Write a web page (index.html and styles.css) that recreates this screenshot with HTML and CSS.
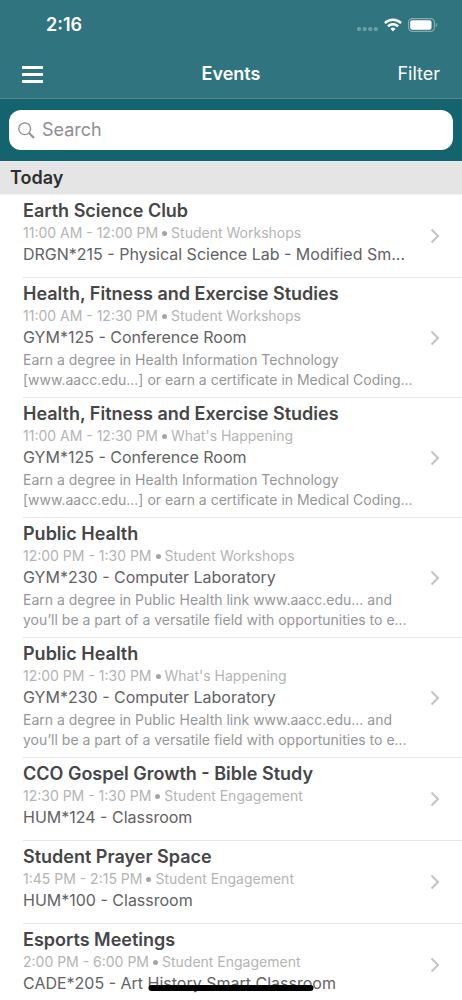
FILE: index.html
```html
<!DOCTYPE html>
<html lang="en">
<head>
<meta charset="utf-8">
<meta name="viewport" content="width=device-width, initial-scale=1">
<title>Events</title>
<link rel="stylesheet" href="styles.css">
</head>
<body>
<svg class="sprite" aria-hidden="true">
  <symbol id="chevron" viewBox="0 0 10 16"><path d="M1.5 1.5 8 8 1.5 14.5" fill="none" stroke="#c4c4c8" stroke-width="2"/></symbol>
</svg>
<div class="app">
  <header class="top">
    <div class="status">
      <span class="clock">2:16</span>
      <div class="indicators">
        <svg width="21" height="5" viewBox="0 0 21 5" fill="#6d9da4" aria-hidden="true"><rect width="4" height="4" rx="1.5"/><rect x="5.6" width="4" height="4" rx="1.5"/><rect x="11.2" width="4" height="4" rx="1.5"/><rect x="16.8" width="4" height="4" rx="1.5"/></svg>
        <svg class="wifi" width="18" height="14" viewBox="0 0 18 14" fill="none" stroke="#fff" stroke-width="2.5" aria-hidden="true"><path d="M.9 5.1a11.6 11.6 0 0 1 16.2 0"/><path d="M4 8.4a7.1 7.1 0 0 1 10 0"/><path d="M6.5 10.8a3.6 3.6 0 0 1 5 0L9 13.4z" fill="#fff" stroke="none"/></svg>
        <svg width="30" height="14" viewBox="0 0 30 14" aria-hidden="true"><rect x=".6" y=".6" width="25.8" height="12.8" rx="3.6" fill="none" stroke="#83acb2" stroke-width="1.2"/><rect x="2.2" y="2.2" width="21.3" height="9.6" rx="2" fill="#fff"/><path d="M27.8 4.8c1.8.7 1.8 3.7 0 4.4z" fill="#83acb2"/></svg>
      </div>
    </div>
    <nav class="bar">
      <button class="menu" type="button" aria-label="Menu">
        <svg width="21" height="17" viewBox="0 0 21 17" fill="#fff" aria-hidden="true"><rect width="21" height="3"/><rect y="7" width="21" height="3"/><rect y="14" width="21" height="3"/></svg>
      </button>
      <h1 class="heading">Events</h1>
      <button class="filter" type="button">Filter</button>
    </nav>
  </header>
  <form class="search">
    <label class="field">
      <svg width="17" height="17" viewBox="0 0 17 17" fill="none" stroke="#8e8e93" aria-label="Search"><circle cx="6.7" cy="6.7" r="5.9" stroke-width="1.3"/><path d="m11 11 5 5" stroke-width="2"/></svg>
      <input class="query" type="text" placeholder="Search">
    </label>
  </form>
  <main class="feed">
    <h2 class="day">Today</h2>
    <ul class="events">
      <li class="event"><div class="info"><h3 class="title">Earth Science Club</h3><p class="meta">11:00 AM - 12:00 PM<i class="dot"></i>Student Workshops</p><p class="place">DRGN*215 - Physical Science Lab - Modified Sm...</p></div><svg class="chevron"><use href="#chevron"/></svg></li>
      <li class="event"><div class="info"><h3 class="title">Health, Fitness and Exercise Studies</h3><p class="meta">11:00 AM - 12:30 PM<i class="dot"></i>Student Workshops</p><p class="place">GYM*125 - Conference Room</p><p class="about">Earn a degree in Health Information Technology<br>[www.aacc.edu...] or earn a certificate in Medical Coding...</p></div><svg class="chevron"><use href="#chevron"/></svg></li>
      <li class="event"><div class="info"><h3 class="title">Health, Fitness and Exercise Studies</h3><p class="meta">11:00 AM - 12:30 PM<i class="dot"></i>What's Happening</p><p class="place">GYM*125 - Conference Room</p><p class="about">Earn a degree in Health Information Technology<br>[www.aacc.edu...] or earn a certificate in Medical Coding...</p></div><svg class="chevron"><use href="#chevron"/></svg></li>
      <li class="event"><div class="info"><h3 class="title">Public Health</h3><p class="meta">12:00 PM - 1:30 PM<i class="dot"></i>Student Workshops</p><p class="place">GYM*230 - Computer Laboratory</p><p class="about">Earn a degree in Public Health link www.aacc.edu... and<br>you’ll be a part of a versatile field with opportunities to e...</p></div><svg class="chevron"><use href="#chevron"/></svg></li>
      <li class="event"><div class="info"><h3 class="title">Public Health</h3><p class="meta">12:00 PM - 1:30 PM<i class="dot"></i>What's Happening</p><p class="place">GYM*230 - Computer Laboratory</p><p class="about">Earn a degree in Public Health link www.aacc.edu... and<br>you’ll be a part of a versatile field with opportunities to e...</p></div><svg class="chevron"><use href="#chevron"/></svg></li>
      <li class="event"><div class="info"><h3 class="title">CCO Gospel Growth - Bible Study</h3><p class="meta">12:30 PM - 1:30 PM<i class="dot"></i>Student Engagement</p><p class="place">HUM*124 - Classroom</p></div><svg class="chevron"><use href="#chevron"/></svg></li>
      <li class="event"><div class="info"><h3 class="title">Student Prayer Space</h3><p class="meta">1:45 PM - 2:15 PM<i class="dot"></i>Student Engagement</p><p class="place">HUM*100 - Classroom</p></div><svg class="chevron"><use href="#chevron"/></svg></li>
      <li class="event"><div class="info"><h3 class="title">Esports Meetings</h3><p class="meta">2:00 PM - 6:00 PM<i class="dot"></i>Student Engagement</p><p class="place">CADE*205 - Art History Smart Classroom</p></div><svg class="chevron"><use href="#chevron"/></svg></li>
    </ul>
  </main>
  <div class="home"></div>
</div>
</body>
</html>
```
FILE: styles.css
```css
* { box-sizing: border-box; margin: 0; padding: 0; }
body { font-family: Inter, "Liberation Sans", sans-serif; background: #fff; color: #464648; }
button, input { font: inherit; border: 0; background: none; color: inherit; }
.sprite { position: absolute; width: 0; height: 0; }
.app { height: 100vh; display: flex; flex-direction: column; overflow: hidden; }

.top { flex: none; background: #2f747e; color: #fff; border-bottom: 1px solid #5c8489; }
.status { height: 50px; padding: 0 24px 0 46px; display: flex; align-items: center; justify-content: space-between; }
.clock { font-size: 18px; line-height: 24px; font-weight: 600; }
.indicators { display: flex; align-items: center; gap: 6px; }
.indicators svg:first-child { margin-top: 9px; }
.bar { height: 48px; padding: 0 22px; display: grid; grid-template-columns: 1fr auto 1fr; align-items: center; }
.menu { justify-self: start; display: flex; }
.heading { font-size: 18px; line-height: 24px; font-weight: 600; }
.filter { justify-self: end; font-size: 18px; line-height: 24px; }

.search { flex: none; padding: 11px 9px; background: #13646f; }
.field { height: 40px; padding: 0 9px; display: flex; align-items: center; gap: 7px; border-radius: 12px; background: #fff; }
.field svg { flex: none; }
.query { flex: 1; min-width: 0; font-size: 18px; line-height: 24px; outline: 0; }
.query::placeholder { color: #8e8e93; opacity: 1; }

.feed { flex: 1; min-height: 0; overflow-y: auto; scrollbar-width: none; }
.day { padding: 5px 10px 4px; font-size: 18px; line-height: 24px; font-weight: 600; color: #2e2e30; background: #e5e5e5; border-bottom: 1px solid #f4f4f4; }
.events { list-style: none; padding-left: 23px; }
.event { min-height: 83px; padding-right: 22px; display: flex; align-items: center; justify-content: space-between; border-bottom: 1px solid #e6e6e8; }
.info { align-self: flex-start; min-width: 0; padding: 4px 0 7px; white-space: nowrap; }
.title { font-size: 18px; line-height: 24px; font-weight: 600; }
.meta { font-size: 14px; line-height: 20px; color: #b4b4b4; display: flex; align-items: center; }
.dot { width: 5px; height: 5px; margin: 0 4px; border-radius: 50%; background: #a4a4a4; }
.place { font-size: 16px; line-height: 22px; color: #626264; }
.about { margin-top: 2px; font-size: 14px; line-height: 20px; color: #969698; }
.chevron { flex: none; width: 10px; height: 16px; }
.home { position: fixed; bottom: 9px; left: 50%; width: 165px; height: 6px; transform: translateX(-50%); border-radius: 3px; background: #000; }
```
